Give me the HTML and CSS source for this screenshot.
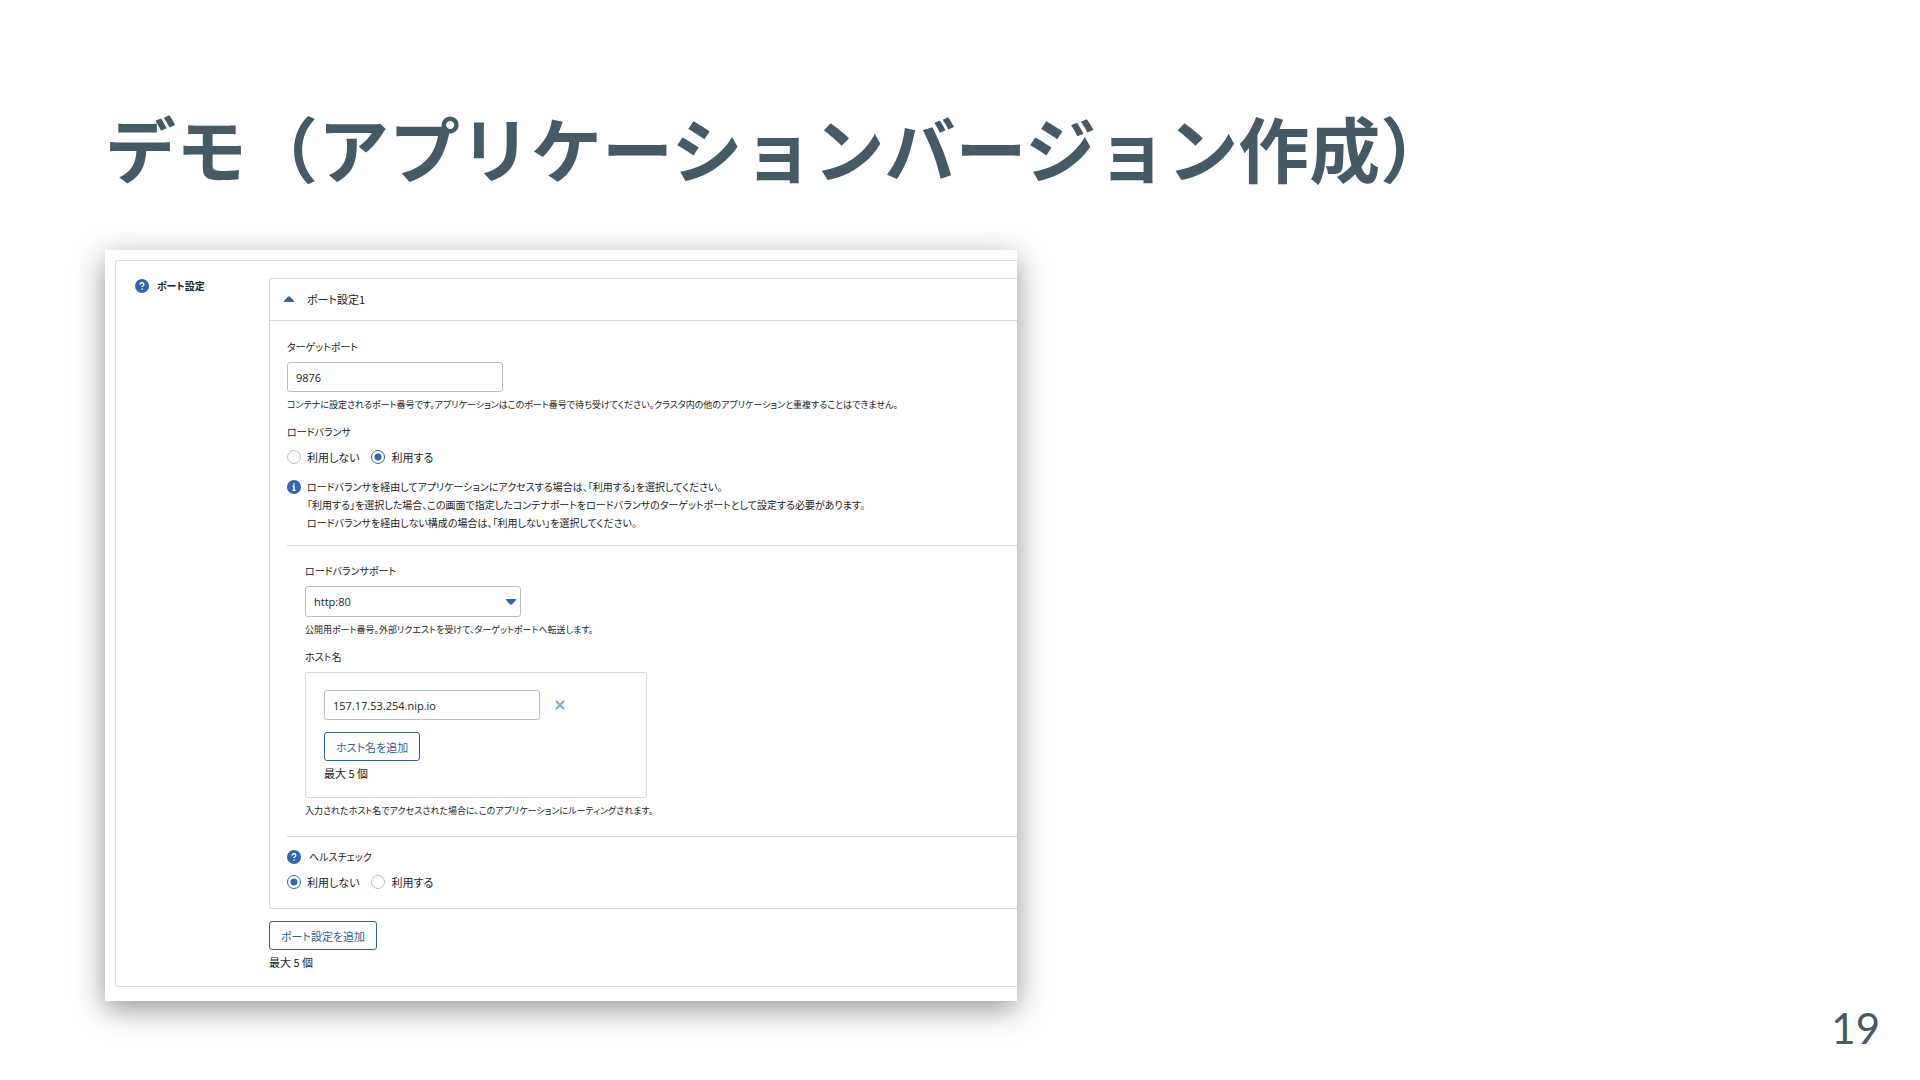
FILE: index.html
```html
<!DOCTYPE html>
<html lang="ja">
<head>
    <meta charset="UTF-8">
    <meta name="viewport" content="width=device-width, initial-scale=1.0">
    <title>デモ（アプリケーションバージョン作成）</title>
    <link rel="stylesheet" href="styles.css">
</head>
<body>
    <main class="slide">
        <h1>デモ（アプリケーションバージョン作成）</h1>
        <div class="shot">
            <form class="settings" autocomplete="off">
                <div class="side">
                    <svg class="icon" viewBox="0 0 16 16"><circle cx="8" cy="8" r="8"/><path d="M5.9 6.4c0-1.3.9-2.1 2.1-2.1s2.1.8 2.1 1.9c0 1.5-2 1.6-2 3"/><path d="M8.1 10.9v1.5"/></svg>
                    <span>ポート設定</span>
                </div>
                <div class="content">
                    <section class="panel">
                        <button type="button" class="panel-head">
                            <svg class="arrow" viewBox="0 0 10 6"><path d="M0 6V5l4-4.5h2L10 5v1z"/></svg>
                            <span>ポート設定1</span>
                        </button>
                        <div class="panel-body">
                            <label class="label" for="target">ターゲットポート</label>
                            <input type="text" id="target" class="text" value="9876">
                            <p class="help">コンテナに設定されるポート番号です。アプリケーションはこのポート番号で待ち受けてください。クラスタ内の他のアプリケーションと重複することはできません。</p>

                            <div class="label gap">ロードバランサ</div>
                            <div class="radios">
                                <label><input type="radio" name="lb">利用しない</label>
                                <label><input type="radio" name="lb" checked>利用する</label>
                            </div>
                            <div class="info">
                                <svg class="icon" viewBox="0 0 16 16"><circle cx="8" cy="8" r="8"/><path d="M8 3.6v1.8M6.4 7.2H8v4.4M6.2 11.8h3.8"/></svg>
                                <p>ロードバランサを経由してアプリケーションにアクセスする場合は、「利用する」を選択してください。<br>「利用する」を選択した場合、この画面で指定したコンテナポートをロードバランサのターゲットポートとして設定する必要があります。<br>ロードバランサを経由しない構成の場合は、「利用しない」を選択してください。</p>
                            </div>

                            <div class="balancer">
                                <label class="label" for="lbport">ロードバランサポート</label>
                                <div class="select">
                                    <select id="lbport">
                                        <option>http:80</option>
                                    </select>
                                    <svg class="arrow down" viewBox="0 0 10 6"><path d="M0 6V5l4-4.5h2L10 5v1z"/></svg>
                                </div>
                                <p class="help">公開用ポート番号。外部リクエストを受けて、ターゲットポートへ転送します。</p>

                                <label class="label gap" for="host">ホスト名</label>
                                <div class="hosts">
                                    <div class="host">
                                        <input type="text" id="host" class="text" value="157.17.53.254.nip.io">
                                        <button type="button" class="remove" aria-label="削除">
                                            <svg viewBox="0 0 10 10"><path d="M1 1l8 8M9 1L1 9"/></svg>
                                        </button>
                                    </div>
                                    <button type="button" class="add">ホスト名を追加</button>
                                    <p class="max">最大 5 個</p>
                                </div>
                                <p class="help">入力されたホスト名でアクセスされた場合に、このアプリケーションにルーティングされます。</p>
                            </div>

                            <div class="label health">
                                <svg class="icon" viewBox="0 0 16 16"><circle cx="8" cy="8" r="8"/><path d="M5.9 6.4c0-1.3.9-2.1 2.1-2.1s2.1.8 2.1 1.9c0 1.5-2 1.6-2 3"/><path d="M8.1 10.9v1.5"/></svg>
                                <span>ヘルスチェック</span>
                            </div>
                            <div class="radios">
                                <label><input type="radio" name="health" checked>利用しない</label>
                                <label><input type="radio" name="health">利用する</label>
                            </div>
                        </div>
                    </section>
                    <button type="button" class="add">ポート設定を追加</button>
                    <p class="max">最大 5 個</p>
                </div>
            </form>
        </div>
        <div class="page">19</div>
    </main>
</body>
</html>
```
FILE: styles.css
```css
* {
    padding: 0;
    margin: 0;
    box-sizing: border-box;
}

body {
    background-color: #fff;
    font-family: "Noto Sans CJK JP", sans-serif;
}

.slide {
    position: relative;
    min-height: 100vh;
    padding: 96px 40px 40px 105px;
}

h1 {
    font-size: 71px;
    line-height: 100px;
    font-weight: 700;
    color: #455a64;
}

.page {
    position: absolute;
    right: 40px;
    bottom: 25px;
    font-family: Lato, sans-serif;
    font-size: 42px;
    line-height: 54px;
    color: #455a64;
}

/* 右端で切れているカード */
.shot {
    width: 47.5vw;
    margin-top: 54px;
    padding: 10px 0 14px 10px;
    overflow: hidden;
    background-color: #fff;
    box-shadow: 0 8px 28px rgba(0, 0, 0, 0.42);
    font-size: 11px;
    line-height: 20px;
    font-feature-settings: "palt";
    color: #222;
}

.settings {
    display: grid;
    grid-template-columns: 134px 1fr;
    padding: 17px 0 14px 19px;
    border: 1px solid #dcdee0;
    border-right: none;
    border-radius: 3px 0 0 3px;
}

.side {
    display: flex;
    align-items: center;
    gap: 8px;
    height: 16px;
    font-size: 10px;
    font-weight: 700;
}

.content {
    min-width: 0;
}

.icon {
    flex: none;
    width: 14px;
    height: 14px;
}

.icon circle {
    fill: #2f65b3;
}

.icon path {
    fill: none;
    stroke: #fff;
    stroke-width: 1.6;
}

.arrow {
    width: 10px;
    height: 6px;
    fill: #2f65b3;
}

.panel {
    margin-bottom: 12px;
    border: 1px solid #d5d9dc;
    border-right: none;
    border-radius: 3px 0 0 3px;
}

.panel-head {
    display: flex;
    align-items: center;
    gap: 13px;
    width: 100%;
    height: 42px;
    padding: 0 14px 2px;
    border: none;
    border-bottom: 1px solid #d5d9dc;
    background: none;
    font: inherit;
    font-feature-settings: inherit;
    color: inherit;
}

.panel-body {
    padding: 16px 0 16px 17px;
}

.label {
    display: block;
    margin-bottom: 5px;
    font-size: 10px;
}

.gap {
    margin-top: 7px;
}

.text,
select {
    display: block;
    width: 216px;
    height: 30px;
    padding: 0 8px;
    border: 1px solid #b9bfc6;
    border-radius: 3px;
    outline: none;
    background-color: #fff;
    font-family: "Open Sans", "Noto Sans CJK JP", sans-serif;
    font-size: 11px;
    color: #222;
}

.help {
    margin-top: 3px;
    font-size: 9px;
    white-space: nowrap;
}

.radios {
    display: flex;
    gap: 12px;
}

.radios label {
    display: flex;
    align-items: center;
    gap: 6px;
}

.radios input {
    appearance: none;
    width: 14px;
    height: 14px;
    border: 1px solid #b9bfc6;
    border-radius: 50%;
}

.radios input:checked {
    border-color: #2f65b3;
    background: radial-gradient(circle, #2f65b3 3px, #fff 4px);
}

.info {
    display: flex;
    gap: 6px;
    margin: 11px 0 13px;
    font-size: 10px;
    line-height: 18px;
    white-space: nowrap;
}

.info .icon {
    margin-top: 2px;
}

.balancer {
    padding: 15px 0 15px 18px;
    border-top: 1px solid #d5d9dc;
    border-bottom: 1px solid #d5d9dc;
}

.select {
    position: relative;
    width: 216px;
}

select {
    appearance: none;
    height: 31px;
}

.down {
    position: absolute;
    right: 5px;
    top: 13px;
    transform: rotate(180deg);
    pointer-events: none;
}

.hosts {
    width: 342px;
    max-width: 100%;
    padding: 17px 18px 14px;
    border: 1px solid #d5d9dc;
    border-radius: 3px;
}

.host {
    display: flex;
    align-items: center;
    gap: 15px;
    margin-bottom: 12px;
}

.remove {
    width: 10px;
    height: 10px;
    border: none;
    background: none;
    cursor: pointer;
}

.remove svg {
    display: block;
    stroke: #7fa8d6;
    stroke-width: 2;
}

.add {
    display: block;
    height: 29px;
    padding: 0 11px;
    border: 1px solid #2f6296;
    border-radius: 3px;
    background-color: #fff;
    font: inherit;
    font-feature-settings: inherit;
    line-height: 20px;
    color: #2f6296;
    cursor: pointer;
}

.max {
    margin-top: 2px;
}

.health {
    display: flex;
    align-items: center;
    gap: 8px;
    margin-top: 10px;
}
```
